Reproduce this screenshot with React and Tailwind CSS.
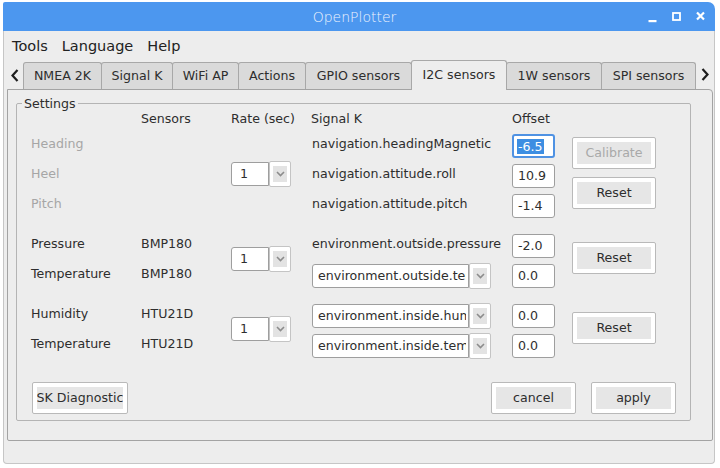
import React from "react";

const FONT = "font-['DejaVu_Sans','Liberation_Sans',sans-serif]";

function Btn({ children, w = "w-[84px]", disabled = false, className = "" }) {
  return (
    <div
      className={`h-[32px] ${w} shrink-0 border border-[#b9b9b9] rounded-[2px] bg-white p-[4px] ${className}`}
    >
      <div
        className={`h-full w-full bg-[#e6e6e6] flex items-center justify-center overflow-hidden whitespace-nowrap ${
          disabled ? "text-[#a9a9a9]" : "text-[#2e2e2e]"
        }`}
      >
        {children}
      </div>
    </div>
  );
}

function DropArrow() {
  return (
    <div className="h-[26px] w-[22px] shrink-0 border border-[#c4c4c4] rounded-[2px] bg-white flex items-center justify-center">
      <div className="w-[14px] h-[16px] bg-[#e3e3e3] flex items-center justify-center">
        <svg width="9" height="6" viewBox="0 0 9 6">
          <path d="M1 1 L4.5 4.5 L8 1" fill="none" stroke="#8c8c8c" strokeWidth="1.6" />
        </svg>
      </div>
    </div>
  );
}

function Combo({ value, w, pad = "pl-[8px]" }) {
  return (
    <div className="flex items-start">
      <div
        className={`mt-[1px] h-[24px] ${w} bg-white border border-[#9e9e9e] rounded-l-[3px] flex items-center ${pad} pr-[2px] text-[#2e2e2e]`}
      >
        <span className="block w-full overflow-hidden whitespace-nowrap">{value}</span>
      </div>
      <DropArrow />
    </div>
  );
}

function Field({ value, focused = false }) {
  if (focused) {
    return (
      <div className="h-[24px] w-[43px] bg-white border-2 border-[#4f92e3] rounded-[3px] flex items-center pl-[3px]">
        <span className="bg-[#3d8ee2] text-white px-[1px] leading-[15px]">{value}</span>
      </div>
    );
  }
  return (
    <div className="h-[24px] w-[43px] bg-white border border-[#9e9e9e] rounded-[3px] flex items-center pl-[5px] text-[#2e2e2e]">
      {value}
    </div>
  );
}

const tabs = [
  { name: "NMEA 2K", w: "w-[79px]" },
  { name: "Signal K", w: "w-[72px]" },
  { name: "WiFi AP", w: "w-[67px]" },
  { name: "Actions", w: "w-[68px]" },
  { name: "GPIO sensors", w: "w-[107px]" },
  { name: "I2C sensors", w: "w-[96px]", active: true },
  { name: "1W sensors", w: "w-[96px]" },
  { name: "SPI sensors", w: "w-[95px]" },
];

export default function App() {
  const label = "self-start pt-[5px] leading-[15px] whitespace-nowrap";
  const dim = "text-[#a6a6a6]";
  const head = "self-start leading-[15px] text-[#2e2e2e] whitespace-nowrap";

  return (
    <div className={`w-[720px] h-[468px] bg-white pt-[2px] pl-[3px] ${FONT} text-[12.6px] text-[#2e2e2e]`}>
      <div className="w-[712px] h-[462px] flex flex-col rounded-tr-[7px] rounded-tl-[2px] overflow-hidden">
        {/* title bar */}
        <div className="h-[29px] bg-[#4c97ef] flex items-center shrink-0">
          <div className="flex-1" />
          <div className="text-[14px] font-light text-[#eef3fd] leading-none pl-[1px]">OpenPlotter</div>
          <div className="flex-1 flex items-center justify-end gap-[15px] pr-[10px] pt-[1px]">
            <svg width="9" height="14" viewBox="0 0 9 14">
              <rect x="0.5" y="10" width="8" height="2.2" fill="white" />
            </svg>
            <svg width="9" height="14" viewBox="0 0 9 14">
              <rect x="1" y="3" width="7" height="7" fill="none" stroke="white" strokeWidth="1.8" />
            </svg>
            <svg width="9" height="14" viewBox="0 0 9 14">
              <path d="M1 2.5 L8 9.5 M8 2.5 L1 9.5" stroke="white" strokeWidth="2.2" />
            </svg>
          </div>
        </div>

        {/* window body */}
        <div className="flex-1 flex flex-col bg-[#ededed] border-x border-b border-[#c6c6c6] rounded-b-[4px]">
          {/* menu bar */}
          <div className="h-[29px] shrink-0 flex items-center gap-[14px] pl-[8px] text-[14.5px] text-[#222] pt-[3px]">
            <span>Tools</span>
            <span>Language</span>
            <span>Help</span>
          </div>

          {/* tabs */}
          <div className="h-[29px] shrink-0 flex items-end">
            <div className="w-[20px] h-full flex items-center justify-center pl-[1px] pt-[1px]">
              <svg width="8" height="13" viewBox="0 0 8 13">
                <path d="M6.5 1 L1.5 6.5 L6.5 12" fill="none" stroke="#1e1e1e" strokeWidth="2.2" />
              </svg>
            </div>
            {tabs.map((t) =>
              t.active ? (
                <div
                  key={t.name}
                  className={`relative z-10 ${t.w} h-[30px] -mb-px -ml-px bg-[#ededed] border-x border-t border-[#a8a8a8] rounded-t-[3px] flex items-center justify-center whitespace-nowrap pb-[1px]`}
                >
                  {t.name}
                </div>
              ) : (
                <div
                  key={t.name}
                  className={`${t.w} h-[27px] -ml-px bg-[#dadada] border-x border-t border-[#a8a8a8] rounded-t-[3px] flex items-center justify-center whitespace-nowrap`}
                >
                  {t.name}
                </div>
              )
            )}
            <div className="flex-1 h-full flex items-center justify-center pb-[1px]">
              <svg width="8" height="13" viewBox="0 0 8 13">
                <path d="M1.5 1 L6.5 6.5 L1.5 12" fill="none" stroke="#1e1e1e" strokeWidth="2.2" />
              </svg>
            </div>
          </div>

          {/* notebook page */}
          <div className="ml-[3px] mr-[1px] h-[352px] shrink-0 border border-[#a3a3a3] rounded-tr-[4px] rounded-b-[2px] bg-[#ededed]">
            <fieldset className="ml-[8px] mt-[6px] w-[675px] border border-[#b4b4b4] rounded-[2px] px-[14px] pb-[6px]">
              <legend className="-ml-[9px] px-[2px] leading-[15px] text-[#2e2e2e]">Settings</legend>

              <div className="grid grid-cols-[110px_90px_80px_201px_60px_84px] grid-rows-[20px_30px_30px_30px_10px_30px_30px_10px_30px_30px]">
                {/* header */}
                <div className={`row-start-1 col-start-2 ${head}`}>Sensors</div>
                <div className={`row-start-1 col-start-3 ${head}`}>Rate (sec)</div>
                <div className={`row-start-1 col-start-4 ${head}`}>Signal K</div>
                <div className={`row-start-1 col-start-5 ${head}`}>Offset</div>

                {/* group 1 */}
                <div className={`row-start-2 col-start-1 ${label} ${dim}`}>Heading</div>
                <div className={`row-start-2 col-start-4 pl-px ${label}`}>navigation.headingMagnetic</div>
                <div className="row-start-2 col-start-5 self-start mt-[3px]">
                  <Field value="-6.5" focused />
                </div>

                <div className={`row-start-3 col-start-1 ${label} ${dim}`}>Heel</div>
                <div className="row-start-3 col-start-3 self-start">
                  <Combo value="1" w="w-[38px]" />
                </div>
                <div className={`row-start-3 col-start-4 pl-px ${label}`}>navigation.attitude.roll</div>
                <div className="row-start-3 col-start-5 self-start mt-[3px]">
                  <Field value="10.9" />
                </div>

                <div className={`row-start-4 col-start-1 ${label} ${dim}`}>Pitch</div>
                <div className={`row-start-4 col-start-4 pl-px ${label}`}>navigation.attitude.pitch</div>
                <div className="row-start-4 col-start-5 self-start mt-[3px]">
                  <Field value="-1.4" />
                </div>

                <div className="row-start-2 row-span-3 col-start-6 self-start mt-[6px] flex flex-col gap-[8px]">
                  <Btn disabled>Calibrate</Btn>
                  <Btn>Reset</Btn>
                </div>

                {/* group 2 */}
                <div className={`row-start-6 col-start-1 ${label}`}>Pressure</div>
                <div className={`row-start-6 col-start-2 ${label}`}>BMP180</div>
                <div className={`row-start-6 col-start-4 pl-px ${label}`}>environment.outside.pressure</div>
                <div className="row-start-6 col-start-5 self-start mt-[3px]">
                  <Field value="-2.0" />
                </div>

                <div className={`row-start-7 col-start-1 ${label}`}>Temperature</div>
                <div className={`row-start-7 col-start-2 ${label}`}>BMP180</div>
                <div className="row-start-7 col-start-4 self-start mt-[2px] pl-px">
                  <Combo value="environment.outside.temperature" w="w-[157px]" pad="pl-[5px]" />
                </div>
                <div className="row-start-7 col-start-5 self-start mt-[3px]">
                  <Field value="0.0" />
                </div>

                <div className="row-start-6 row-span-2 col-start-3 self-start mt-[15px]">
                  <Combo value="1" w="w-[38px]" />
                </div>
                <div className="row-start-6 row-span-2 col-start-6 self-start mt-[11px]">
                  <Btn>Reset</Btn>
                </div>

                {/* group 3 */}
                <div className={`row-start-9 col-start-1 ${label}`}>Humidity</div>
                <div className={`row-start-9 col-start-2 ${label}`}>HTU21D</div>
                <div className="row-start-9 col-start-4 self-start mt-[2px] pl-px">
                  <Combo value="environment.inside.humidity" w="w-[157px]" pad="pl-[5px]" />
                </div>
                <div className="row-start-9 col-start-5 self-start mt-[3px]">
                  <Field value="0.0" />
                </div>

                <div className={`row-start-10 col-start-1 ${label}`}>Temperature</div>
                <div className={`row-start-10 col-start-2 ${label}`}>HTU21D</div>
                <div className="row-start-10 col-start-4 self-start mt-[2px] pl-px">
                  <Combo value="environment.inside.temperature" w="w-[157px]" pad="pl-[5px]" />
                </div>
                <div className="row-start-10 col-start-5 self-start mt-[3px]">
                  <Field value="0.0" />
                </div>

                <div className="row-start-9 row-span-2 col-start-3 self-start mt-[15px]">
                  <Combo value="1" w="w-[38px]" />
                </div>
                <div className="row-start-9 row-span-2 col-start-6 self-start mt-[11px]">
                  <Btn>Reset</Btn>
                </div>
              </div>

              {/* bottom buttons */}
              <div className="mt-[21px] flex items-center">
                <Btn w="w-[96px]" className="ml-[1px]">SK Diagnostic</Btn>
                <div className="flex-1" />
                <Btn w="w-[85px]">cancel</Btn>
                <Btn w="w-[85px]" className="ml-[15px]">apply</Btn>
              </div>
            </fieldset>
          </div>
        </div>
      </div>
    </div>
  );
}
